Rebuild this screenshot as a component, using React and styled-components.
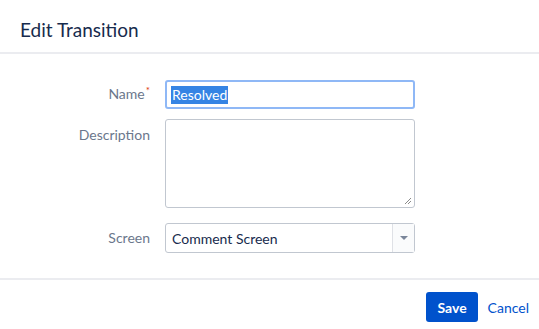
import styled, { createGlobalStyle } from "styled-components";

const Global = createGlobalStyle`
  html, body { margin: 0; padding: 0; background: #fff; }
  body { font-family: "Segoe UI", Lato, "Liberation Sans", sans-serif; color: #172b4d; }
  * { box-sizing: border-box; }
`;

const Dialog = styled.div`
  width: 539px;
  height: 329px;
  display: flex;
  flex-direction: column;
  background: #fff;
`;

const Header = styled.div`
  height: 54px;
  padding: 0 20px;
  display: flex;
  align-items: center;
  border-bottom: 2px solid #ebecf0;
  h2 {
    margin: 0;
    font-size: 19px;
    font-weight: 400;
    color: #172b4d;
    padding-top: 6px;
  }
`;

const Body = styled.div`
  height: 226px;
  padding: 26px 0 0;
  display: flex;
  flex-direction: column;
  gap: 11px;
  border-bottom: 2px solid #ebecf0;
`;

const Row = styled.div`
  display: grid;
  grid-template-columns: 150px 250px;
  column-gap: 15px;
  align-items: start;
  margin-top: ${(p) => p.$top || 0}px;
`;

const Label = styled.label`
  text-align: right;
  font-size: 14px;
  color: #6b778c;
  padding-top: ${(p) => p.$pt || 5}px;
  line-height: 18px;
  sup {
    color: #de350b;
    font-size: 10px;
    vertical-align: top;
    position: relative;
    top: -4px;
    margin-left: 1px;
  }
`;

const TextInput = styled.div`
  height: 29px;
  border: 2px solid #8fb8f6;
  border-radius: 3px;
  padding: 0 4px;
  display: flex;
  align-items: center;
  font-size: 14px;
  span {
    background: #3584e4;
    color: #fff;
    line-height: 18px;
    padding: 0 1px;
  }
`;

const TextArea = styled.div`
  height: 89px;
  margin-top: -1px;
  border: 1px solid #c1c7d0;
  border-radius: 3px;
  position: relative;
  svg {
    position: absolute;
    right: 2px;
    bottom: 2px;
  }
`;

const Select = styled.div`
  height: 30px;
  border: 1px solid #c1c7d0;
  border-radius: 3px;
  display: flex;
  align-items: stretch;
  font-size: 14px;
  color: #172b4d;
`;

const SelectValue = styled.div`
  flex: 1;
  display: flex;
  align-items: center;
  padding: 0 6px;
`;

const SelectArrow = styled.div`
  width: 22px;
  border-left: 1px solid #dfe1e6;
  display: flex;
  align-items: center;
  justify-content: center;
  background: #fafbfc;
  &::after {
    content: "";
    border-left: 4px solid transparent;
    border-right: 4px solid transparent;
    border-top: 4px solid #7a869a;
  }
`;

const Footer = styled.div`
  flex: 1;
  padding: 12px 9px 0 0;
  display: flex;
  justify-content: flex-end;
  align-items: flex-start;
  gap: 9px;
`;

const Button = styled.button`
  height: 30px;
  border: none;
  border-radius: 3px;
  font-family: inherit;
  font-size: 14px;
  cursor: pointer;
  background: ${(p) => (p.$primary ? "#0052cc" : "transparent")};
  color: ${(p) => (p.$primary ? "#fff" : "#0052cc")};
  font-weight: ${(p) => (p.$primary ? 700 : 400)};
  padding: ${(p) => (p.$primary ? "0 11px" : "0 1px")};
`;

export default function App() {
  return (
    <Dialog>
      <Global />
      <Header>
        <h2>Edit Transition</h2>
      </Header>
      <Body>
        <Row>
          <Label>
            Name<sup>*</sup>
          </Label>
          <TextInput>
            <span>Resolved</span>
          </TextInput>
        </Row>
        <Row>
          <Label $pt={6}>Description</Label>
          <TextArea>
            <svg width="8" height="8" viewBox="0 0 8 8">
              <path d="M7 1 L1 7 M7 4 L4 7" stroke="#8a8a8a" strokeWidth="1" />
            </svg>
          </TextArea>
        </Row>
        <Row $top={4}>
          <Label $pt={6}>Screen</Label>
          <Select>
            <SelectValue>Comment Screen</SelectValue>
            <SelectArrow />
          </Select>
        </Row>
      </Body>
      <Footer>
        <Button $primary>Save</Button>
        <Button>Cancel</Button>
      </Footer>
    </Dialog>
  );
}
